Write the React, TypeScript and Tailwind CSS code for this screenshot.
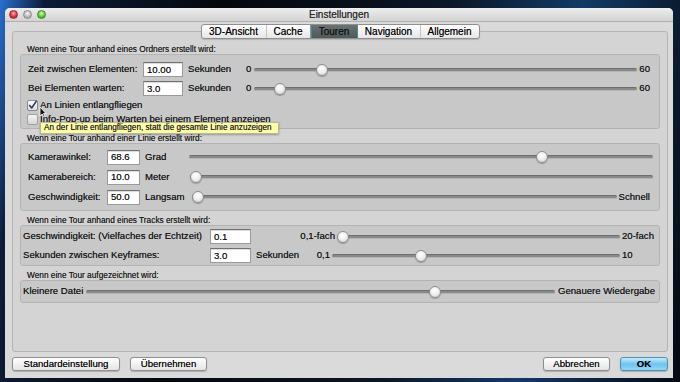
import React from "react";

function Slider({ frac, className = "" }: { frac: number; className?: string }) {
  return (
    <div className={"relative h-[12px] flex-1 " + className}>
      <div className="absolute left-0 right-0 top-[4px] h-[4px] rounded-full bg-[#8a8a8a] border-t border-[#6e6e6e] border-b border-b-[#b4b4b4]" />
      <div
        className="absolute top-0 h-[12px] w-[12px] rounded-full border border-[#8d8d8d] bg-[radial-gradient(circle_at_45%_35%,#ffffff_0%,#f0f0f0_45%,#c9c9c9_100%)] shadow-[0_1px_1px_rgba(0,0,0,0.25)]"
        style={{ left: `calc(${frac} * (100% - 12px))` }}
      />
    </div>
  );
}

function Input({ value, w }: { value: string; w: string }) {
  return (
    <div
      className={
        "h-[15px] bg-white border border-[#9a9a9a] border-t-[#707070] pl-[3px] flex items-center leading-none shadow-[inset_0_1px_1px_rgba(0,0,0,0.15)] " +
        w
      }
    >
      {value}
    </div>
  );
}

function Label({ children }: { children: React.ReactNode }) {
  return (
    <div className="h-[14px] pt-[4px] pl-[7px] text-[8.3px] leading-[10px] text-[#1a1a1a]">{children}</div>
  );
}

function Box({ children, className = "" }: { children: React.ReactNode; className?: string }) {
  return (
    <div className={"relative rounded-[3px] border border-[#b3b3b3] bg-[#c8c8c8] " + className}>{children}</div>
  );
}

export default function App() {
  return (
    <div className="w-[680px] h-[382px] overflow-hidden bg-[linear-gradient(100deg,#2a6fd0_0%,#0c1c38_6%,#05070c_30%,#0b1626_60%,#123a66_78%,#05080f_100%)] pt-[8px] font-['Liberation_Sans',Arial,sans-serif] text-[9.6px] text-[#111] [text-shadow:0_0_0.3px_rgba(0,0,0,0.6)]">
      <div className="ml-[5px] w-[668px] h-[370px] rounded-t-[5px] bg-[#dadada] flex flex-col">
        {/* title bar */}
        <div className="relative h-[14px] rounded-t-[5px] bg-[linear-gradient(#eeeeee,#d2d2d2)] border-b border-[#b0b0b0] flex items-center pl-[4px] gap-[5px]">
          <div className="h-[9px] w-[9px] rounded-full bg-[radial-gradient(circle_at_50%_35%,#ffb0b8,#e0303f_55%,#a01828)] border border-[#9a2a32]" />
          <div className="h-[9px] w-[9px] rounded-full bg-[radial-gradient(circle_at_50%_35%,#f2f2f2,#bcbcbc_55%,#8e8e8e)] border border-[#8a8a8a]" />
          <div className="h-[9px] w-[9px] rounded-full bg-[radial-gradient(circle_at_50%_35%,#d8ffb8,#5cc838_55%,#2f8a1a)] border border-[#3c8a2a]" />
          <div className="absolute inset-0 flex items-center justify-center text-[10px] text-[#2a2a2a]">Einstellungen</div>
        </div>

        {/* pane */}
        <div className="ml-[7px] mt-[9px] w-[656px] h-[321px] rounded-[3px] border border-[#b4b4b4] bg-[#d4d4d4] px-[7px] flex flex-col">
          <div className="-mt-[8px] h-[15px] self-center flex rounded-[3px] border border-[#8f8f8f] bg-[linear-gradient(#ffffff,#e6e6e6)] text-[10px] text-black shadow-[0_1px_1px_rgba(0,0,0,0.15)] overflow-hidden">
            <div className="w-[65px] flex items-center justify-center border-r border-[#c4c4c4]">3D-Ansicht</div>
            <div className="w-[44px] flex items-center justify-center border-r border-[#8f8f8f]">Cache</div>
            <div className="w-[47px] flex items-center justify-center bg-[linear-gradient(#6a7374,#4e5859)] border-x border-[#4a8a8e] text-[#111]">Touren</div>
            <div className="w-[63px] flex items-center justify-center border-r border-[#c4c4c4]">Navigation</div>
            <div className="w-[58px] flex items-center justify-center">Allgemein</div>
          </div>

          <div className="mt-[1px]" />
          <Label>Wenn eine Tour anhand eines Ordners erstellt wird:</Label>
          <Box className="h-[75px] pt-[5px] pl-[7px] pr-[9px]">
            <div className="flex items-center h-[19px]">
              <span className="w-[115px]">Zeit zwischen Elementen:</span>
              <Input value="10.00" w="w-[40px]" />
              <span className="ml-[5px] w-[58px]">Sekunden</span>
              <span className="w-[6px]">0</span>
              <Slider frac={0.166} className="ml-[2px]" />
              <span className="ml-[2px]">60</span>
            </div>
            <div className="flex items-center h-[19px]">
              <span className="w-[115px]">Bei Elementen warten:</span>
              <Input value="3.0" w="w-[40px]" />
              <span className="ml-[5px] w-[58px]">Sekunden</span>
              <span className="w-[6px]">0</span>
              <Slider frac={0.053} className="ml-[2px]" />
              <span className="ml-[2px]">60</span>
            </div>
            <div className="flex items-center h-[14px] -ml-[1px]">
              <div className="h-[11px] w-[11px] rounded-[2px] border border-[#8a8a8a] bg-[linear-gradient(#ffffff,#dcdcdc)] flex items-center justify-center">
                <svg width="11" height="11" viewBox="0 0 11 11">
                  <path d="M2 5.5 L4.5 8.5 L10 0.5" stroke="#243f6e" strokeWidth="2" fill="none" strokeLinecap="round" strokeLinejoin="round" />
                </svg>
              </div>
              <span className="ml-[2px]">An Linien entlangfliegen</span>
            </div>
            <div className="flex items-center h-[14px] -ml-[1px]">
              <div className="h-[11px] w-[11px] rounded-[2px] border border-[#a0a0a0] bg-[linear-gradient(#f4f4f4,#d6d6d6)]" />
              <span className="ml-[2px]">Info-Pop-up beim Warten bei einem Element anzeigen</span>
            </div>
            <div className="absolute left-[19px] top-[67px] z-10 h-[12px] w-[239px] border border-[#b8b890] bg-[#fbfba8] text-[8.2px] leading-[10px] pl-[3px] text-[#222] shadow-[0_1px_2px_rgba(0,0,0,0.3)] whitespace-nowrap overflow-hidden">
              An der Linie entlangfliegen, statt die gesamte Linie anzuzeigen
            </div>
            <svg className="absolute left-[18px] top-[51px] z-20" width="8" height="12" viewBox="0 0 8 12">
              <path d="M1 1 L1 10 L3.2 8 L4.8 11.2 L6 10.6 L4.5 7.5 L7 7.5 Z" fill="#111" stroke="#fff" strokeWidth="0.8" />
            </svg>
          </Box>

          <Label>Wenn eine Tour anhand einer Linie erstellt wird:</Label>
          <Box className="h-[68px] pt-[3px] pl-[7px]">
            <div className="flex items-center h-[20px] pr-[6px]">
              <span className="w-[79px]">Kamerawinkel:</span>
              <Input value="68.6" w="w-[33px]" />
              <span className="ml-[5px] w-[44px]">Grad</span>
              <Slider frac={0.768} />
            </div>
            <div className="flex items-center h-[20px] pr-[6px]">
              <span className="w-[79px]">Kamerabereich:</span>
              <Input value="10.0" w="w-[33px]" />
              <span className="ml-[5px] w-[45px]">Meter</span>
              <Slider frac={0} />
            </div>
            <div className="flex items-center h-[20px] pr-[9px]">
              <span className="w-[79px]">Geschwindigkeit:</span>
              <Input value="50.0" w="w-[33px]" />
              <span className="ml-[5px] w-[47px]">Langsam</span>
              <Slider frac={0} />
              <span className="ml-[2px]">Schnell</span>
            </div>
          </Box>

          <Label>Wenn eine Tour anhand eines Tracks erstellt wird:</Label>
          <Box className="h-[41px] pt-[1px] pl-[2px] pr-[2px]">
            <div className="flex items-center h-[19px]">
              <span className="w-[187px]">Geschwindigkeit: (Vielfaches der Echtzeit)</span>
              <Input value="0.1" w="w-[41px]" />
              <span className="w-[86px] text-right pr-[2px]">0,1-fach</span>
              <Slider frac={0} />
              <span className="ml-[2px] w-[35px]">20-fach</span>
            </div>
            <div className="flex items-center h-[19px]">
              <span className="w-[187px]">Sekunden zwischen Keyframes:</span>
              <Input value="3.0" w="w-[41px]" />
              <div className="w-[81px] flex justify-between pl-[5px] pr-[2px]">
                <span>Sekunden</span>
                <span>0,1</span>
              </div>
              <Slider frac={0.3} />
              <span className="ml-[2px] w-[35px]">10</span>
            </div>
          </Box>

          <Label>Wenn eine Tour aufgezeichnet wird:</Label>
          <Box className="h-[23px] pl-[2px] pr-[4px] flex items-center">
            <span>Kleinere Datei</span>
            <Slider frac={0.75} className="ml-[3px]" />
            <span className="ml-[3px]">Genauere Wiedergabe</span>
          </Box>
        </div>

        {/* buttons */}
        <div className="mt-[5px] h-[14px] pl-[7px] pr-[5px] flex items-center">
          <div className="h-[14px] w-[108px] rounded-[3px] border border-[#8e8e8e] bg-[linear-gradient(#ffffff,#e4e4e4)] flex items-center justify-center text-black shadow-[0_1px_1px_rgba(0,0,0,0.2)]">
            Standardeinstellung
          </div>
          <div className="ml-[10px] h-[14px] w-[77px] rounded-[3px] border border-[#8e8e8e] bg-[linear-gradient(#ffffff,#e4e4e4)] flex items-center justify-center text-black shadow-[0_1px_1px_rgba(0,0,0,0.2)]">
            Übernehmen
          </div>
          <div className="ml-auto h-[14px] w-[67px] rounded-[3px] border border-[#8e8e8e] bg-[linear-gradient(#ffffff,#e4e4e4)] flex items-center justify-center text-black shadow-[0_1px_1px_rgba(0,0,0,0.2)]">
            Abbrechen
          </div>
          <div className="ml-[10px] h-[14px] w-[48px] rounded-[3px] border border-[#4f8db5] bg-[linear-gradient(#c8ecfc,#6cc4ee_50%,#8fd6f6)] flex items-center justify-center text-black font-bold shadow-[0_1px_1px_rgba(0,0,0,0.2)]">
            OK
          </div>
        </div>
      </div>
    </div>
  );
}
